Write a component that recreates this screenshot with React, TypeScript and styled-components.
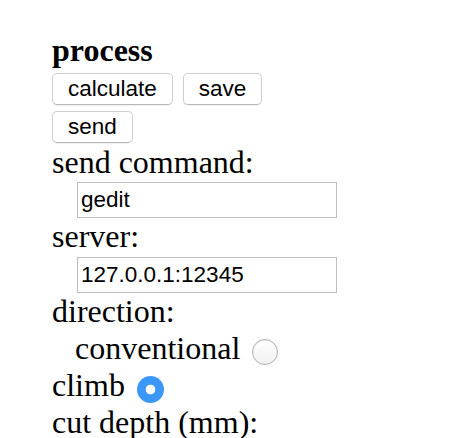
import React from "react";
import styled, { createGlobalStyle } from "styled-components";

const GlobalStyle = createGlobalStyle`
  html, body { margin: 0; padding: 0; background: #fff; }
  body {
    font-family: "Liberation Serif", "Times New Roman", serif;
    font-size: 32px;
    color: #000;
  }
`;

const Panel = styled.div`
  width: 288px;
  padding: 32px 0 0 52px;
`;

const Title = styled.div`
  font-weight: bold;
  line-height: 37px;
`;

const ButtonRow = styled.div`
  display: flex;
  flex-wrap: wrap;
  gap: 6px 10px;
  margin-top: 4px;
`;

const Button = styled.button`
  box-sizing: border-box;
  height: 32px;
  padding: 0 15px;
  font-family: "Liberation Sans", Arial, sans-serif;
  font-size: 22.5px;
  color: #000;
  background: #fff;
  border: 1px solid #cfcfcf;
  border-bottom-color: #b8b8b8;
  border-radius: 5px;
  box-shadow: 0 1px 1px rgba(0, 0, 0, 0.06);
`;

const Line = styled.div<{ $indent?: number; $mt?: number }>`
  line-height: 37px;
  padding-left: ${(p) => p.$indent ?? 0}px;
  margin-top: ${(p) => p.$mt ?? 0}px;
`;

const Field = styled.div<{ $mt?: number }>`
  padding-left: 25px;
  margin-top: ${(p) => p.$mt ?? 0}px;
  display: flex;
`;

const TextInput = styled.input`
  box-sizing: border-box;
  width: 260px;
  height: 36px;
  margin: 0;
  padding: 0 3px;
  border: 1px solid #bdbdbd;
  border-radius: 0;
  font-family: "Liberation Sans", Arial, sans-serif;
  font-size: 22.5px;
  color: #000;
  outline: none;
`;

const RadioRow = styled.label<{ $indent?: number }>`
  display: flex;
  align-items: flex-start;
  line-height: 37px;
  padding-left: ${(p) => p.$indent ?? 0}px;
`;

const Radio = styled.input`
  appearance: none;
  -webkit-appearance: none;
  box-sizing: border-box;
  width: 26px;
  height: 26px;
  margin: 9px 0 0 12px;
  border-radius: 50%;
  border: 1px solid #adadad;
  background: linear-gradient(#ffffff, #f1f1f1);
  box-shadow: inset 0 1px 1px rgba(0, 0, 0, 0.06);

  &:checked {
    border: none;
    width: 27px;
    height: 27px;
    background: radial-gradient(circle, #fff 0 4.5px, #3b97f8 5.2px);
    box-shadow: none;
  }
`;

export default function App() {
  return (
    <>
      <GlobalStyle />
      <Panel>
        <Title>process</Title>
        <ButtonRow>
          <Button>calculate</Button>
          <Button>save</Button>
          <Button>send</Button>
        </ButtonRow>
        <Line $mt={1}>send command:</Line>
        <Field $mt={1}>
          <TextInput defaultValue="gedit" />
        </Field>
        <Line>server:</Line>
        <Field $mt={2}>
          <TextInput defaultValue="127.0.0.1:12345" />
        </Field>
        <Line>direction:</Line>
        <RadioRow $indent={23}>
          conventional
          <Radio type="radio" name="direction" />
        </RadioRow>
        <RadioRow>
          climb
          <Radio type="radio" name="direction" defaultChecked />
        </RadioRow>
        <Line>cut depth (mm):</Line>
      </Panel>
    </>
  );
}
